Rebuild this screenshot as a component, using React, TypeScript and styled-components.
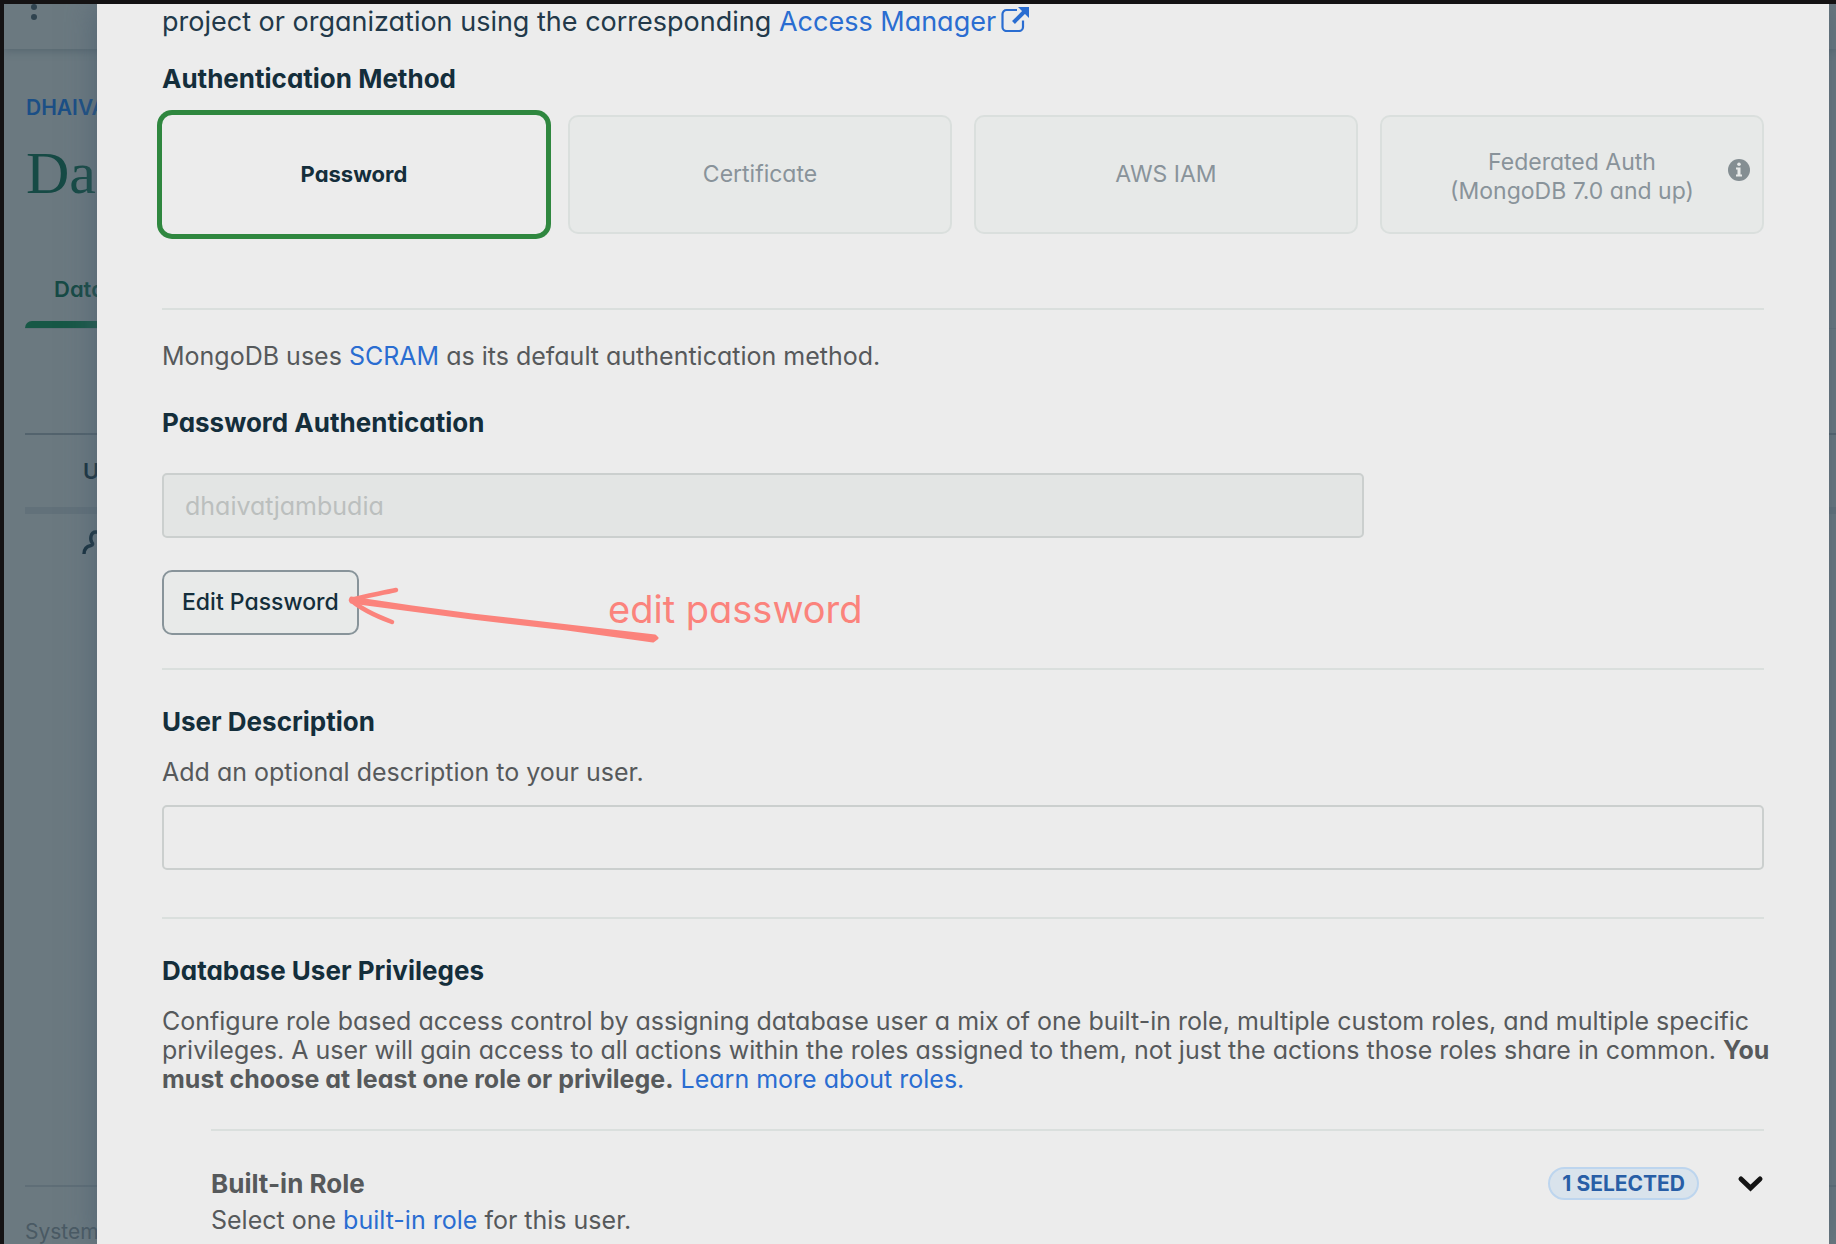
import React from "react";
import styled, { createGlobalStyle, css } from "styled-components";

const sans = `Inter, "Liberation Sans", sans-serif`;
const c = {
  frame: "#141213",
  page: "#6b7980",
  modal: "#ececec",
  rule: "#dadfdd",
  field: "#cbcfce",
  heading: "#142e3b",
  body: "#56595b",
  link: "#2a6dd1",
  muted: "#89939a",
  disabled: "#e7e9e8",
  mark: "#fb837c",
};

const Global = createGlobalStyle`
  *, *::before, *::after { box-sizing: border-box; }
  html, body { margin: 0; height: 100%; }
  body {
    background: ${c.page};
    font-family: ${sans};
    font-feature-settings: "cv11";
    overflow: hidden;
  }
  h1, h2, h3, p { margin: 0; }
  a { text-decoration: none; }
`;

const Screen = styled.div`
  position: relative;
  height: 100vh;
  overflow: hidden;
  border-top: 4px solid ${c.frame};
  border-left: 4px solid ${c.frame};
`;

/* ---- page behind the dialog ---- */
const Page = styled.div`
  display: flex;
  flex-direction: column;
  height: 100%;
  background: ${c.page};
`;

const TopBar = styled.header`
  height: 45px;
  flex: none;
  padding-left: 26px;
  box-shadow: 0 2px 8px rgba(60, 80, 92, 0.45);
`;

const Crumb = styled.a`
  align-self: flex-start;
  margin: 45px 0 0 22px;
  font-size: 21px;
  line-height: 28px;
  font-weight: 600;
  color: #1b4f86;
`;

const PageTitle = styled.h1`
  margin: 17px 0 0 22px;
  font-family: "Liberation Serif", serif;
  font-size: 60px;
  line-height: 68px;
  font-weight: 400;
  color: #164a45;
`;

const Tabs = styled.nav`
  display: flex;
  margin: 68px 0 0 21px;
  border-bottom: 1px solid #63727a;
`;

const TabItem = styled.div`
  display: flex;
  flex-direction: column;
  width: 240px;
`;

const Tab = styled.a`
  padding: 0 29px 18px;
  font-size: 22px;
  line-height: 28px;
  font-weight: 600;
  color: #164a45;
`;

const TabBar = styled.span`
  height: 7px;
  border-radius: 8px 8px 0 0;
  background: #175846;
`;

const UserTable = styled.table`
  margin: 104px 0 0 21px;
  border-collapse: collapse;
  border-top: 2px solid #53636d;

  th {
    height: 76px;
    padding: 0 0 0 58px;
    text-align: left;
    font-size: 22px;
    font-weight: 600;
    color: #17303e;
  }
  thead {
    border-bottom: 7px solid #62717a;
  }
  td {
    padding: 16px 0 0 57px;
  }
`;

const Footer = styled.footer`
  margin: auto 0 0 21px;
  height: 59px;
  padding-top: 29px;
  border-top: 2px solid #5f6e77;
  font-size: 21px;
  line-height: 32px;
  color: #4a5a64;
`;

/* ---- dialog ---- */
const DialogShade = styled.div`
  position: absolute;
  top: 0;
  bottom: 0;
  left: 93px;
  right: 7px;
  box-shadow: 0 0 30px rgba(72, 92, 110, 0.7);
`;

const Dialog = styled.section`
  position: absolute;
  top: 0;
  bottom: 0;
  left: 93px;
  right: 7px;
  overflow: hidden;
  padding: 2px 65px 0;
  background: ${c.modal};
`;

const Lead = styled.p`
  font-size: 27px;
  line-height: 32px;
  color: #22394a;
`;

const Link = styled.a`
  color: ${c.link};
`;

const ExternalIcon = styled.svg`
  margin-left: 5px;
  vertical-align: -1px;
`;

const Heading = styled.h2<{ $soft?: boolean; $top?: number }>`
  margin-top: ${(p) => p.$top ?? 36}px;
  font-size: 26px;
  line-height: 32px;
  font-weight: 700;
  color: ${(p) => (p.$soft ? c.body : c.heading)};
`;

const Text = styled.p<{ $top: number }>`
  display: block;
  margin-top: ${(p) => p.$top}px;
  font-size: 25px;
  line-height: 29px;
  color: ${c.body};
`;

const WideText = styled(Text)`
  margin-right: -24px;
`;

const Rule = styled.hr<{ $top: number }>`
  height: 2px;
  margin: ${(p) => p.$top}px 0 0;
  border: 0;
  background: ${c.rule};
`;

const Methods = styled.div`
  display: grid;
  grid-template-columns: repeat(4, 1fr);
  gap: 22px;
  margin-top: 20px;
`;

const Method = styled.button<{ $on?: boolean; $twoLines?: boolean }>`
  position: relative;
  height: 119px;
  padding: ${(p) => (p.$twoLines ? "5px" : "0")} 0 0;
  border: 2px solid ${c.rule};
  border-radius: 10px;
  background: ${c.disabled};
  font: 400 23px/29px ${sans};
  font-feature-settings: inherit;
  color: ${c.muted};
  ${(p) =>
    p.$on &&
    css`
      border-color: ${c.modal};
      background: ${c.modal};
      color: ${c.heading};
      font-size: 22px;
      font-weight: 700;
      box-shadow: 0 0 0 5px #2f873f;
    `}
`;

const InfoBadge = styled.svg`
  position: absolute;
  top: 42px;
  right: 12px;
`;

const Field = styled.input<{ $top: number; $width?: string }>`
  display: block;
  width: ${(p) => p.$width ?? "100%"};
  height: 65px;
  margin-top: ${(p) => p.$top}px;
  padding: 0 21px;
  border: 2px solid ${c.field};
  border-radius: 5px;
  background: transparent;
  font: 400 25px/29px ${sans};
  font-feature-settings: inherit;
  color: ${c.heading};
  &:disabled {
    background: #e3e5e4;
    color: #bbbfbe;
  }
`;

const EditRow = styled.div`
  position: relative;
  display: flex;
  margin-top: 32px;
`;

const EditButton = styled.button`
  height: 65px;
  padding: 0 18px;
  border: 2px solid #88949a;
  border-radius: 10px;
  background: #e8eae9;
  font: 500 23px/29px ${sans};
  font-feature-settings: inherit;
  color: ${c.heading};
`;

const Arrow = styled.svg`
  position: absolute;
  left: 180px;
  top: 12px;
`;

const Note = styled.span`
  position: absolute;
  left: 446px;
  top: 15px;
  font-size: 38px;
  line-height: 48px;
  color: ${c.mark};
`;

const Privilege = styled.div`
  margin-left: 49px;
`;

const PrivilegeHead = styled.div`
  display: flex;
  align-items: center;
  margin-top: 36px;
`;

const Badge = styled.span`
  margin-left: auto;
  padding: 0 12px;
  border: 2px solid #bdd5ee;
  border-radius: 17px;
  background: #d9e3ec;
  font-size: 21px;
  line-height: 29px;
  font-weight: 700;
  color: #285ea6;
`;

const Toggle = styled.button`
  display: flex;
  margin-left: 38px;
  padding: 0;
  border: 0;
  background: none;
`;

export default function App() {
  return (
    <>
      <Global />
      <Screen>
        <Page>
          <TopBar>
            <svg width="8" height="16" viewBox="0 0 8 16" fill="#2f434f">
              <circle cx="4" cy="3" r="3" />
              <circle cx="4" cy="13" r="3" />
            </svg>
          </TopBar>
          <Crumb href="#org">DHAIVA</Crumb>
          <PageTitle>Da</PageTitle>
          <Tabs>
            <TabItem>
              <Tab href="#users">Data</Tab>
              <TabBar />
            </TabItem>
          </Tabs>
          <UserTable>
            <thead>
              <tr>
                <th>User</th>
              </tr>
            </thead>
            <tbody>
              <tr>
                <td>
                  <svg width="28" height="24" viewBox="0 0 28 24" fill="none" stroke="#17303e" strokeWidth="3.4">
                    <path d="M2 24c0-5 2-7.500 7-8.500 2-.5 2-1.800 1-3C8 10 8 2 14 2s6 8 4 10.500c-1 1.200-1 2.500 1 3 5 1 7 3.500 7 8.500" />
                  </svg>
                </td>
              </tr>
            </tbody>
          </UserTable>
          <Footer>System</Footer>
        </Page>

        <DialogShade />
        <Dialog role="dialog" aria-label="Edit user">
          <Lead>
            project or organization using the corresponding{" "}
            <Link href="#access">
              Access Manager
              <ExternalIcon width="28" height="25" viewBox="0 0 28 25" fill="none" stroke="currentColor" strokeWidth="2.2">
                <path d="M16 3H5.500A4 4 0 0 0 1.500 7v13a4 4 0 0 0 4 4H18a4 4 0 0 0 4-4v-6.500" />
                <path d="M12.500 15.500 23 5" strokeWidth="4" />
                <path d="M17 0h11v11z" fill="currentColor" stroke="none" />
              </ExternalIcon>
            </Link>
          </Lead>

          <Heading $top={25}>Authentication Method</Heading>
          <Methods>
            <Method $on>Password</Method>
            <Method disabled>Certificate</Method>
            <Method disabled>AWS IAM</Method>
            <Method disabled $twoLines>
              Federated Auth
              <br />
              (MongoDB 7.0 and up)
              <InfoBadge width="22" height="22" viewBox="0 0 22 22">
                <circle cx="11" cy="11" r="11" fill="#848e92" />
                <circle cx="11" cy="5.200" r="1.800" fill={c.disabled} />
                <path d="M8 8.500h4.500v7H14v2H8v-2h1.500v-5H8z" fill={c.disabled} />
              </InfoBadge>
            </Method>
          </Methods>

          <Rule $top={74} />
          <Text $top={32}>
            MongoDB uses <Link href="#scram">SCRAM</Link> as its default authentication method.
          </Text>
          <Heading>Password Authentication</Heading>
          <Field aria-label="Username" disabled defaultValue="dhaivatjambudia" $top={34} $width="75%" />
          <EditRow>
            <EditButton>Edit Password</EditButton>
            <Arrow width="320" height="64" viewBox="0 0 320 64" fill={c.mark} stroke={c.mark} strokeLinecap="round" strokeLinejoin="round">
              <path d="M9 16 70 25 130 33 313 54 315 56 311 59 225 47 130 36 9 20z" strokeWidth="3" />
              <path d="M9 18C22 14 36 12 54 8M9 18C20 28 34 34 50 40" fill="none" strokeWidth="4.5" />
            </Arrow>
            <Note>edit password</Note>
          </EditRow>

          <Rule $top={33} />
          <Heading>User Description</Heading>
          <Text as="label" htmlFor="description" $top={20}>
            Add an optional description to your user.
          </Text>
          <Field id="description" $top={18} />

          <Rule $top={47} />
          <Heading>Database User Privileges</Heading>
          <WideText $top={20}>
            Configure role based access control by assigning database user a mix of one built-in role, multiple custom
            roles, and multiple specific privileges. A user will gain access to all actions within the roles assigned to
            them, not just the actions those roles share in common. <b>You must choose at least one role or privilege.</b>{" "}
            <Link href="#roles">Learn more about roles.</Link>
          </WideText>

          <Privilege>
            <Rule $top={35} />
            <PrivilegeHead>
              <Heading as="h3" $soft $top={0}>
                Built-in Role
              </Heading>
              <Badge>1 SELECTED</Badge>
              <Toggle aria-label="Expand Built-in Role">
                <svg width="27" height="18" viewBox="0 0 27 18" fill="none" stroke="#141414" strokeWidth="5" strokeLinecap="round">
                  <path d="M4 4 13.500 13 23 4" />
                </svg>
              </Toggle>
            </PrivilegeHead>
            <Text $top={6}>
              Select one <Link href="#builtin">built-in role</Link> for this user.
            </Text>
          </Privilege>
        </Dialog>
      </Screen>
    </>
  );
}
